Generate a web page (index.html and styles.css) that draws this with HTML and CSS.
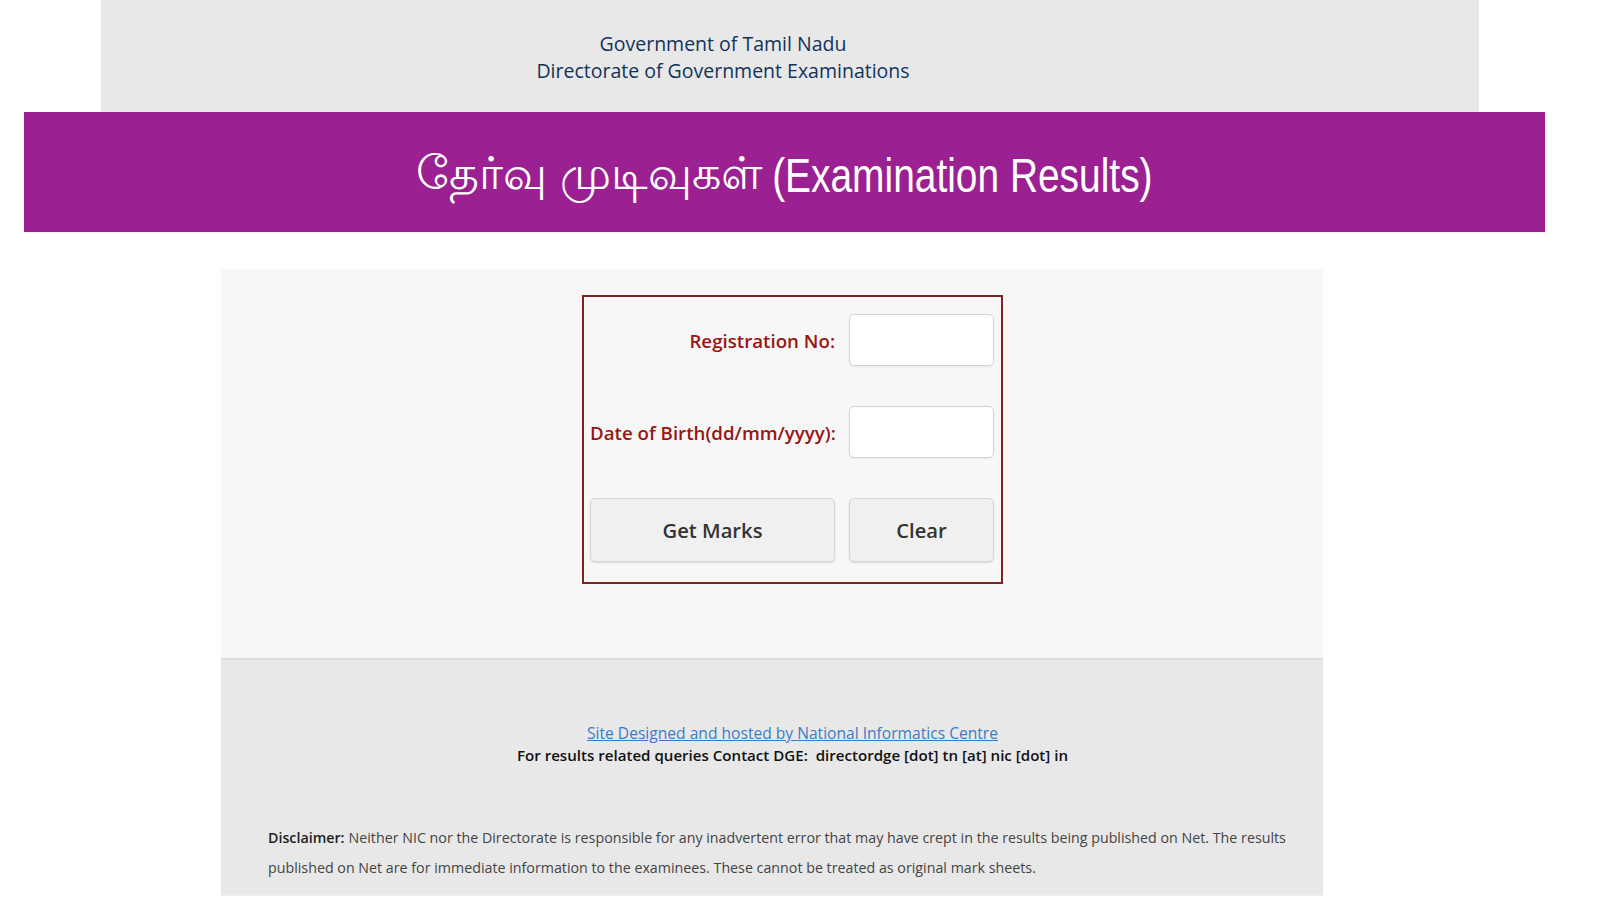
FILE: index.html
```html
<!DOCTYPE html>
<html lang="en">
<head>
<meta charset="utf-8">
<title>Examination Results</title>
<link rel="stylesheet" href="styles.css">
</head>
<body>
<div class="page">
  <header class="top">
    <div class="top-text">
      <div>Government of Tamil Nadu</div>
      <div>Directorate of Government Examinations</div>
    </div>
  </header>
  <div class="banner">
    <h1 class="banner-title"><span class="ta" lang="ta">தேர்வு முடிவுகள்</span> <span class="en">(Examination Results)</span></h1>
  </div>
  <main class="panel">
    <form class="form-box">
      <label class="lbl" for="reg">Registration No:</label>
      <input class="field" id="reg" type="text">
      <label class="lbl" for="dob">Date of Birth(dd/mm/yyyy):</label>
      <input class="field" id="dob" type="text">
      <button class="btn" type="button">Get Marks</button>
      <button class="btn" type="button">Clear</button>
    </form>
  </main>
  <footer class="foot">
    <div class="foot-center">
      <a class="nic" href="#">Site Designed and hosted by National Informatics Centre</a>
      <div class="contact">For results related queries Contact DGE:&nbsp; directordge [dot] tn [at] nic [dot] in</div>
    </div>
    <div class="disclaimer">
      <div class="disc-line"><span class="disc-label">Disclaimer:</span><span class="disc-text">Neither NIC nor the Directorate is responsible for any inadvertent error that may have crept in the results being published on Net. The results</span></div>
      <div class="disc-line">published on Net are for immediate information to the examinees. These cannot be treated as original mark sheets.</div>
    </div>
  </footer>
</div>
</body>
</html>
```

FILE: styles.css
```css
html, body {
  margin: 0;
  padding: 0;
  background: #ffffff;
  overflow: hidden;
}
body {
  font-family: "Open Sans", "Noto Sans", sans-serif;
  color: #333;
}
.page {
  width: 1600px;
  height: 900px;
}
.top {
  margin-left: 101px;
  width: 1378px;
  height: 112px;
  background: #e8e8e8;
  display: flex;
  align-items: center;
  justify-content: center;
  padding-right: 134px;
  box-sizing: border-box;
}
.top-text {
  text-align: center;
  color: #13335a;
  font-size: 19.5px;
  line-height: 27.5px;
  padding-top: 2px;
}
.banner {
  margin-left: 24px;
  width: 1521px;
  height: 120px;
  background: #9b2192;
  display: flex;
  align-items: center;
  justify-content: center;
  box-shadow: 1px 1px 2px rgba(0,0,0,0.08);
}
.banner-title {
  margin: 0;
  color: #ffffff;
  font-family: "Liberation Sans", Arial, sans-serif;
  font-weight: normal;
  line-height: 50px;
  padding-top: 6px;
  white-space: nowrap;
}
.ta {
  font-size: 46px;
}
.en {
  display: inline-block;
  font-size: 38.9px;
  transform: scaleY(1.22);
}
.panel {
  margin: 37px 0 0 221px;
  width: 1102px;
  height: 389px;
  background: #f7f7f7;
  display: flex;
  justify-content: center;
  align-items: flex-start;
  padding: 26px 0 0 41px;
  box-sizing: border-box;
}
.form-box {
  border: 2px solid #7d2323;
  padding: 17px 7px 20px 6px;
  display: grid;
  grid-template-columns: 245px 145px;
  grid-template-rows: 52px 52px 64px;
  column-gap: 14px;
  row-gap: 40px;
  align-items: center;
}
.lbl {
  text-align: right;
  color: #9a1414;
  font-weight: 600;
  font-size: 18.7px;
  white-space: nowrap;
}
.field {
  box-sizing: border-box;
  width: 145px;
  height: 52px;
  margin: 0;
  border: 1px solid #d4d4d4;
  border-radius: 5px;
  background: #fff;
  box-shadow: 0 1px 2px rgba(0,0,0,0.06);
}
.btn {
  box-sizing: border-box;
  height: 64px;
  margin: 0;
  border: 1px solid #d6d6d6;
  border-radius: 5px;
  background: #f0f0f0;
  color: #333;
  font-family: "Open Sans", "Noto Sans", sans-serif;
  font-weight: 600;
  font-size: 20.2px;
  box-shadow: 0 1px 2px rgba(0,0,0,0.12);
}
.foot {
  margin-left: 221px;
  width: 1102px;
  height: 238px;
  background: #e8e8e8;
  border-top: 2px solid #dcdcdc;
  border-bottom: 2px solid #eeeeee;
  box-sizing: border-box;
  padding-top: 62px;
}
.foot-center {
  text-align: center;
  padding-left: 41px;
  line-height: 22.4px;
}
.nic {
  color: #3a7bc8;
  font-size: 15.6px;
  text-decoration: underline;
}
.contact {
  color: #111;
  font-weight: 600;
  font-size: 15.1px;
}
.disclaimer {
  margin: 56px 36px 0 47px;
  font-size: 14.25px;
  line-height: 30.6px;
  color: #444;
}
.disc-line {
  white-space: nowrap;
}
.disc-label {
  font-weight: 600;
  color: #222;
  margin-right: 4px;
}
```
